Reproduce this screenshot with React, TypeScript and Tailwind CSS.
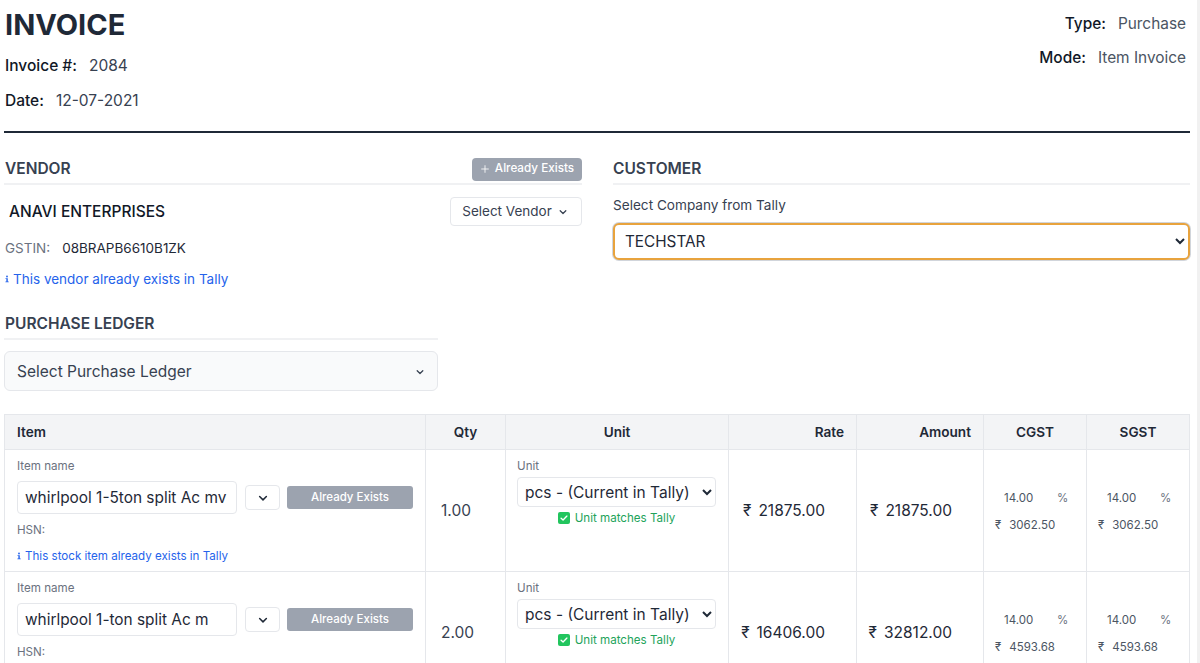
import React from "react";

const Chevron = ({ className = "" }: { className?: string }) => (
  <svg viewBox="0 0 16 16" fill="none" stroke="currentColor" strokeWidth="2" strokeLinecap="round" strokeLinejoin="round" className={className}>
    <path d="M3.5 6l4.5 4.5L12.5 6" />
  </svg>
);

const Info = () => (
  <svg viewBox="0 0 8 14" className="w-[4px] h-[10px] shrink-0 fill-[#2563eb]">
    <circle cx="4" cy="2" r="1.8" />
    <path d="M1 5.5h4.6V12H7.5v1.6H.8V12h1.9V7.1H1z" />
  </svg>
);

const Check = () => (
  <span className="w-[12px] h-[12px] rounded-[2px] bg-[#22c55e] flex items-center justify-center shrink-0">
    <svg viewBox="0 0 12 12" fill="none" stroke="white" strokeWidth="1.6" strokeLinecap="round" strokeLinejoin="round" className="w-[10px] h-[10px]">
      <path d="M2.5 6.2l2.4 2.3 4.6-4.8" />
    </svg>
  </span>
);

type Row = { name: string; qty: string; rate: string; amount: string; tax: string; note: boolean };

const rows: Row[] = [
  { name: "whirlpool 1-5ton split Ac mv", qty: "1.00", rate: "21875.00", amount: "21875.00", tax: "3062.50", note: true },
  { name: "whirlpool 1-ton split Ac m", qty: "2.00", rate: "16406.00", amount: "32812.00", tax: "4593.68", note: false },
];

const Tax = ({ value }: { value: string }) => (
  <td className="border border-[#e5e7eb] align-middle pt-[2px]">
    <div className="flex flex-col gap-[15px] text-[11.5px] leading-[12px] text-[#4b5563] pl-[11px]">
      <div className="flex pl-[9px]">
        <span className="w-[53px]">14.00</span>
        <span className="text-[#6b7280]">%</span>
      </div>
      <div className="flex gap-[8px]">
        <span>₹</span>
        <span>{value}</span>
      </div>
    </div>
  </td>
);

const TableRow = ({ r }: { r: Row }) => (
  <tr className="h-[122px]">
    <td className="border border-[#e5e7eb] align-top pl-[12px] pr-[12px] pt-[9px]">
      <div className="text-[11.6px] leading-[14px] text-[#6b7280]">Item name</div>
      <div className="flex items-center mt-[8px]">
        <input
          readOnly
          defaultValue={r.name}
          className="w-[220px] h-[33px] border border-[#e5e7eb] rounded-[4px] px-[7px] text-[15.4px] text-[#1f2937] bg-white outline-none"
        />
        <div className="w-[35px] h-[25px] ml-[8px] border border-[#e5e7eb] rounded-[4px] flex items-center justify-center text-[#1f2937]">
          <Chevron className="w-[12px] h-[12px]" />
        </div>
        <div className="w-[126px] h-[23px] ml-[7px] bg-[#9ca3af] rounded-[3px] flex items-center justify-center text-white text-[11.5px] font-medium">
          Already Exists
        </div>
      </div>
      <div className="text-[11.6px] leading-[14px] text-[#6b7280] mt-[9px]">HSN:</div>
      {r.note && (
        <div className="flex items-center gap-[4px] text-[11.6px] leading-[14px] text-[#2563eb] mt-[12px]">
          <Info />
          This stock item already exists in Tally
        </div>
      )}
    </td>
    <td className="border border-[#e5e7eb] align-middle pl-[15px] text-[15.5px] text-[#374151]">{r.qty}</td>
    <td className="border border-[#e5e7eb] align-top pl-[11px] pr-[12px] pt-[9px]">
      <div className="text-[11.6px] leading-[14px] text-[#6b7280]">Unit</div>
      <select
        defaultValue="pcs"
        className="block w-[199px] h-[30px] mt-[4px] border border-[#e5e7eb] rounded-[4px] pl-[3px] text-[15.5px] text-[#1f2937] bg-white outline-none"
      >
        <option value="pcs">pcs - (Current in Tally)</option>
      </select>
      <div className="flex items-center justify-center gap-[5px] mt-[4px] text-[11.6px] leading-[14px] text-[#22a35a]">
        <Check />
        Unit matches Tally
      </div>
    </td>
    <td className="border border-[#e5e7eb] align-middle pr-[31px] text-[15.5px] text-[#1f2937]">
      <div className="flex justify-end gap-[7px]">
        <span>₹</span>
        <span>{r.rate}</span>
      </div>
    </td>
    <td className="border border-[#e5e7eb] align-middle pr-[31px] text-[15.5px] text-[#1f2937]">
      <div className="flex justify-end gap-[7px]">
        <span>₹</span>
        <span>{r.amount}</span>
      </div>
    </td>
    <Tax value={r.tax} />
    <Tax value={r.tax} />
  </tr>
);

export default function App() {
  return (
    <div className="h-[663px] overflow-hidden bg-white pl-[4px] pr-[10px] font-['Inter',sans-serif] text-[#1f2937] relative">
      <div className="absolute right-0 top-0 bottom-0 w-[3px] bg-[#f1f1f1]" />
      <header className="h-[133px] border-b-2 border-[#1f2937] flex justify-between">
        <div className="pl-[1px]">
          <h1 className="text-[29px] leading-[36px] font-bold text-[#1f2937] mt-[7px]">INVOICE</h1>
          <p className="mt-[11px] leading-[24px] text-[15.5px]">
            <span className="font-medium text-[#111827]">Invoice #:</span>
            <span className="ml-[12px] text-[#374151]">2084</span>
          </p>
          <p className="mt-[11px] leading-[24px] text-[15.5px]">
            <span className="font-medium text-[#111827]">Date:</span>
            <span className="ml-[12px] text-[#374151]">12-07-2021</span>
          </p>
        </div>
        <div className="pr-[4px] text-right text-[15.4px] leading-[24px] pt-[12px]">
          <p>
            <span className="font-medium text-[#111827]">Type:</span>
            <span className="ml-[12px] text-[#4b5563]">Purchase</span>
          </p>
          <p className="mt-[10px]">
            <span className="font-medium text-[#111827]">Mode:</span>
            <span className="ml-[12px] text-[#4b5563]">Item Invoice</span>
          </p>
        </div>
      </header>

      <section className="flex gap-[31px] mt-[25px]">
        <div className="w-[578px] shrink-0">
          <div className="flex items-center justify-between h-[27px] border-b-2 border-[#f0f1f3] pb-[3px]">
            <h2 className="pl-[1px] text-[15.5px] font-semibold text-[#374151]">VENDOR</h2>
            <div className="w-[110px] h-[23px] bg-[#9ca3af] rounded-[4px] flex items-center justify-center gap-[5px] text-white text-[11.7px] font-medium">
              <svg viewBox="0 0 12 12" className="w-[10px] h-[10px]" stroke="white" strokeWidth="1" fill="none">
                <path d="M6 1.5v9M1.5 6h9" />
              </svg>
              Already Exists
            </div>
          </div>
          <div className="flex items-center justify-between mt-[12px]">
            <div className="pl-[5px] text-[15.5px] font-medium text-[#111827]">ANAVI ENTERPRISES</div>
            <div className="w-[132px] h-[29px] border border-[#e5e7eb] rounded-[4px] flex items-center justify-center gap-[6px] pr-[2px] text-[13.5px] text-[#374151]">
              Select Vendor
              <Chevron className="w-[10px] h-[10px]" />
            </div>
          </div>
          <div className="flex pl-[1px] text-[13.5px] leading-[20px] mt-[12px]">
            <span className="text-[#6b7280]">GSTIN:</span>
            <span className="ml-[12px] text-[#1f2937]">08BRAPB6610B1ZK</span>
          </div>
          <div className="flex items-center gap-[4px] pl-[1px] text-[13.5px] leading-[20px] text-[#2563eb] mt-[11px]">
            <Info />
            This vendor already exists in Tally
          </div>
          <div className="w-[434px] mt-[23px]">
            <h2 className="pl-[1px] text-[15.5px] font-semibold leading-[24px] text-[#374151] pb-[2px] border-b-2 border-[#f0f1f3]">PURCHASE LEDGER</h2>
            <div className="h-[40px] mt-[11px] bg-[#f9fafb] border border-[#e5e7eb] rounded-[6px] flex items-center justify-between pl-[12px] pr-[12px] pt-[1px] text-[15.5px] text-[#374151]">
              Select Purchase Ledger
              <Chevron className="w-[10px] h-[10px]" />
            </div>
          </div>
        </div>
        <div className="flex-1 min-w-0">
          <h2 className="h-[27px] text-[15.5px] font-semibold leading-[22px] text-[#374151] border-b-2 border-[#f0f1f3]">CUSTOMER</h2>
          <div className="text-[13.6px] leading-[20px] text-[#374151] mt-[10px]">Select Company from Tally</div>
          <select
            defaultValue="TECHSTAR"
            className="block w-full h-[37px] mt-[8px] border-2 border-[#e8a33d] rounded-[6px] pl-[6px] text-[15.3px] text-[#1f2937] bg-white outline-none shadow-[0_0_0_1px_#d1d5db]"
          >
            <option value="TECHSTAR">TECHSTAR</option>
          </select>
        </div>
      </section>

      <table className="table-fixed border-collapse w-[1185px] mt-[23px]">
        <colgroup>
          <col className="w-[421px]" />
          <col className="w-[80px]" />
          <col className="w-[223px]" />
          <col className="w-[128px]" />
          <col className="w-[127px]" />
          <col className="w-[103px]" />
          <col className="w-[103px]" />
        </colgroup>
        <thead>
          <tr className="h-[35px] bg-[#f3f4f6] text-[13.6px] font-semibold text-[#1f2937]">
            <th className="border border-[#e5e7eb] text-left pl-[12px] font-semibold">Item</th>
            <th className="border border-[#e5e7eb] text-center font-semibold">Qty</th>
            <th className="border border-[#e5e7eb] text-center font-semibold">Unit</th>
            <th className="border border-[#e5e7eb] text-right pr-[12px] font-semibold">Rate</th>
            <th className="border border-[#e5e7eb] text-right pr-[12px] font-semibold">Amount</th>
            <th className="border border-[#e5e7eb] text-center font-semibold">CGST</th>
            <th className="border border-[#e5e7eb] text-center font-semibold">SGST</th>
          </tr>
        </thead>
        <tbody>
          {rows.map((r) => (
            <TableRow key={r.name} r={r} />
          ))}
        </tbody>
      </table>
    </div>
  );
}
